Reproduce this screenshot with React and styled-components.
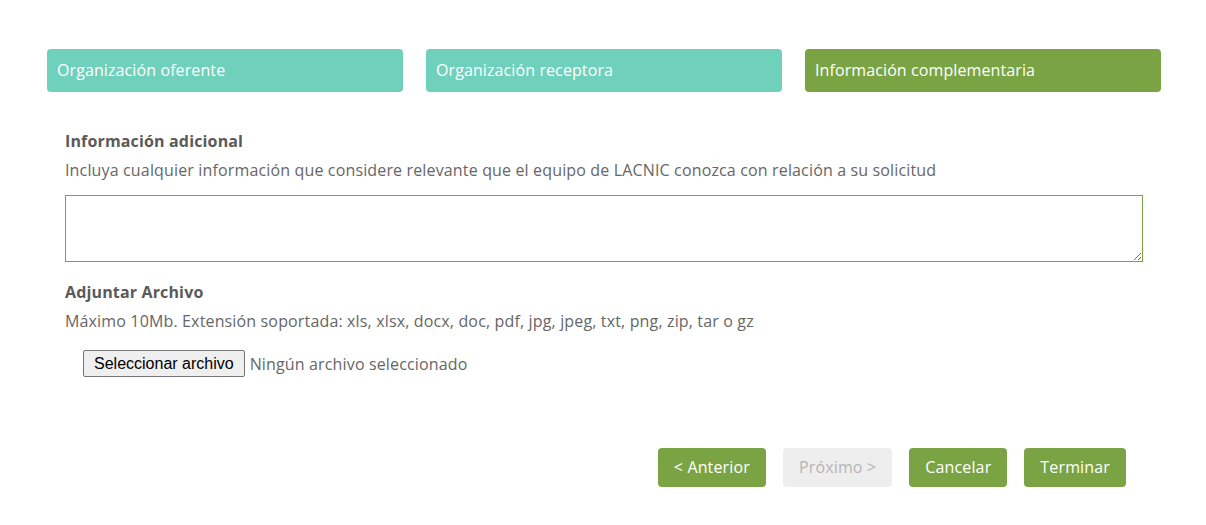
import React from "react";
import styled, { createGlobalStyle } from "styled-components";

const Global = createGlobalStyle`
  html, body { margin: 0; padding: 0; background: #fff; }
  body { font-family: "Open Sans", "DejaVu Sans", sans-serif; color: #666; letter-spacing: 0.15px; }
  * { box-sizing: border-box; }
`;

const Page = styled.div`
  padding: 49px 45px 30px 47px;
`;

const Steps = styled.div`
  display: grid;
  grid-template-columns: repeat(3, 1fr);
  gap: 23px;
`;

const Step = styled.div`
  height: 43px;
  display: flex;
  align-items: center;
  padding: 0 10px 1px;
  border-radius: 4px;
  font-size: 16px;
  letter-spacing: 0.1px;
  color: #fff;
  background: ${(p) => (p.$active ? "#7aa443" : "#6fd0bc")};
`;

const Body = styled.div`
  padding: 38px 18px 0 18px;
  display: flex;
  flex-direction: column;
`;

const Label = styled.div`
  font-size: 16px;
  line-height: 22px;
  font-weight: 700;
  color: #5a5a5a;
  margin-bottom: 7px;
`;

const Help = styled.div`
  font-size: 16px;
  line-height: 22px;
  color: #666;
`;

const TextArea = styled.textarea`
  display: block;
  width: 100%;
  height: 67px;
  margin: 14px 0 19px;
  border: 1px solid #7aa443;
  border-radius: 0;
  padding: 8px 16px;
  font-family: "Open Sans", sans-serif;
  font-size: 16px;
  line-height: 24px;
  color: #555;
  outline: none;
  resize: vertical;
`;

const FileRow = styled.div`
  display: flex;
  align-items: center;
  gap: 5px;
  margin: 18px 0 0 18px;
`;

const FileButton = styled.label`
  display: inline-block;
  font-family: "Liberation Sans", Arial, sans-serif;
  font-size: 16px;
  line-height: 19px;
  letter-spacing: 0;
  padding: 3px 10px;
  color: #000;
  background: #efefef;
  border: 1px solid #767676;
  border-radius: 2px;
  cursor: default;
`;

const HiddenInput = styled.input`
  display: none;
`;

const FileStatus = styled.span`
  font-size: 16px;
  color: #666;
`;

const Actions = styled.div`
  display: flex;
  justify-content: flex-end;
  gap: 17px;
  margin: 71px 35px 0 0;
`;

const Button = styled.button`
  height: 39px;
  padding: 0 16px 1px;
  border: none;
  border-radius: 4px;
  font-family: "Open Sans", sans-serif;
  font-size: 16px;
  letter-spacing: 0.15px;
  color: ${(p) => (p.disabled ? "#b5b5b5" : "#fff")};
  background: ${(p) => (p.disabled ? "#eeeeee" : "#7aa443")};
  cursor: ${(p) => (p.disabled ? "default" : "pointer")};
`;

export default function App() {
  return (
    <Page>
      <Global />
      <Steps>
        <Step>Organización oferente</Step>
        <Step>Organización receptora</Step>
        <Step $active>Información complementaria</Step>
      </Steps>
      <Body>
        <Label>Información adicional</Label>
        <Help>
          Incluya cualquier información que considere relevante que el equipo de LACNIC conozca con relación a su solicitud
        </Help>
        <TextArea autoFocus />
        <Label>Adjuntar Archivo</Label>
        <Help>Máximo 10Mb. Extensión soportada: xls, xlsx, docx, doc, pdf, jpg, jpeg, txt, png, zip, tar o gz</Help>
        <FileRow>
          <FileButton>
            Seleccionar archivo
            <HiddenInput type="file" />
          </FileButton>
          <FileStatus>Ningún archivo seleccionado</FileStatus>
        </FileRow>
      </Body>
      <Actions>
        <Button>&lt; Anterior</Button>
        <Button disabled>Próximo &gt;</Button>
        <Button>Cancelar</Button>
        <Button>Terminar</Button>
      </Actions>
    </Page>
  );
}
